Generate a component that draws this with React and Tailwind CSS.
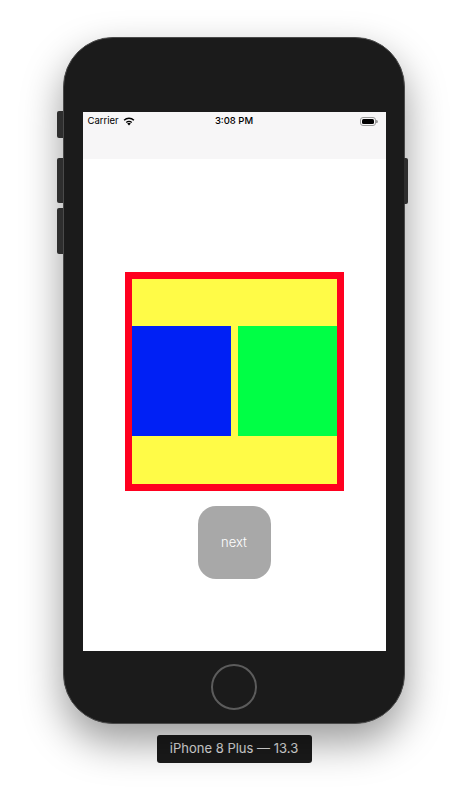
import React from "react";

const Wifi = () => (
  <svg width="12" height="9" viewBox="0 0 12 9" className="ml-[4px]">
    <path d="M6 8.6 L4.2 6.6 A2.6 2.6 0 0 1 7.8 6.6 Z" fill="#000" />
    <path d="M2.8 5.1 A4.6 4.6 0 0 1 9.2 5.1 L8.3 6.1 A3.3 3.3 0 0 0 3.7 6.1 Z" fill="#000" />
    <path d="M0.6 2.7 A7.8 7.8 0 0 1 11.4 2.7 L10.4 3.8 A6.4 6.4 0 0 0 1.6 3.8 Z" fill="#000" />
  </svg>
);

const Battery = () => (
  <div className="flex items-center">
    <div className="w-[16px] h-[9px] rounded-[3px] border border-[#9a9a9a] p-[1px]">
      <div className="w-full h-full bg-black rounded-[1.5px]" />
    </div>
    <div className="w-[1.5px] h-[3px] bg-[#9a9a9a] rounded-r-sm" />
  </div>
);

const App = () => {
  return (
    <div className="w-[468px] h-[799px] bg-white flex flex-col items-center pt-[37px] overflow-hidden">
      {/* PHONE */}
      <div className="relative w-[342px] h-[687px] rounded-[50px] bg-[#1b1b1b] border border-[#4a4a4a] shadow-[0_18px_40px_rgba(0,0,0,0.4)] flex flex-col items-center pt-[74px]">
        {/* side buttons */}
        <div className="absolute left-[-7px] top-[73px] w-[6px] h-[27px] rounded-l-[2px] bg-[#2e2e2e]" />
        <div className="absolute left-[-7px] top-[120px] w-[6px] h-[45px] rounded-l-[2px] bg-[#2e2e2e]" />
        <div className="absolute left-[-7px] top-[170px] w-[6px] h-[46px] rounded-l-[2px] bg-[#2e2e2e]" />
        <div className="absolute right-[-4px] top-[120px] w-[4px] h-[46px] rounded-r-[2px] bg-[#2e2e2e]" />

        {/* SCREEN */}
        <div className="w-[303px] h-[539px] bg-white flex flex-col font-['Inter','Liberation_Sans',sans-serif]">
          <div className="h-[47px] bg-[#f7f6f7]">
            <div className="h-[17px] mt-[1px] px-[5px] flex items-center justify-between text-[9.5px] text-black">
              <div className="flex items-center w-[60px]">
                <span>Carrier</span>
                <Wifi />
              </div>
              <span className="font-medium">3:08 PM</span>
              <div className="w-[60px] flex justify-end pr-[3px]">
                <Battery />
              </div>
            </div>
          </div>

          <div className="flex flex-col items-center pt-[113px]">
            <div className="w-[219px] h-[219px] border-[7px] border-[#ff001f] bg-[#fffb47] pt-[47px]">
              <div className="flex gap-[7px] h-[110px]">
                <div className="w-[99px] bg-[#0020f5]" />
                <div className="w-[99px] bg-[#00ff45]" />
              </div>
            </div>

            <button className="mt-[15px] w-[73px] h-[73px] rounded-[18px] bg-[#a8a8a8] text-white text-[13px] font-light">
              next
            </button>
          </div>
        </div>

        {/* HOME BUTTON */}
        <div className="mt-[13px] w-[46px] h-[46px] rounded-full border-2 border-[#5c5c5c]" />
      </div>

      {/* LABEL */}
      <div className="mt-[11px] w-[155px] h-[28px] rounded-[3px] bg-[#1b1b1b] flex items-center justify-center text-[13px] text-[#e2e2e2] font-['Inter','Liberation_Sans',sans-serif]">
        iPhone 8 Plus — 13.3
      </div>
    </div>
  );
};

export default App;
